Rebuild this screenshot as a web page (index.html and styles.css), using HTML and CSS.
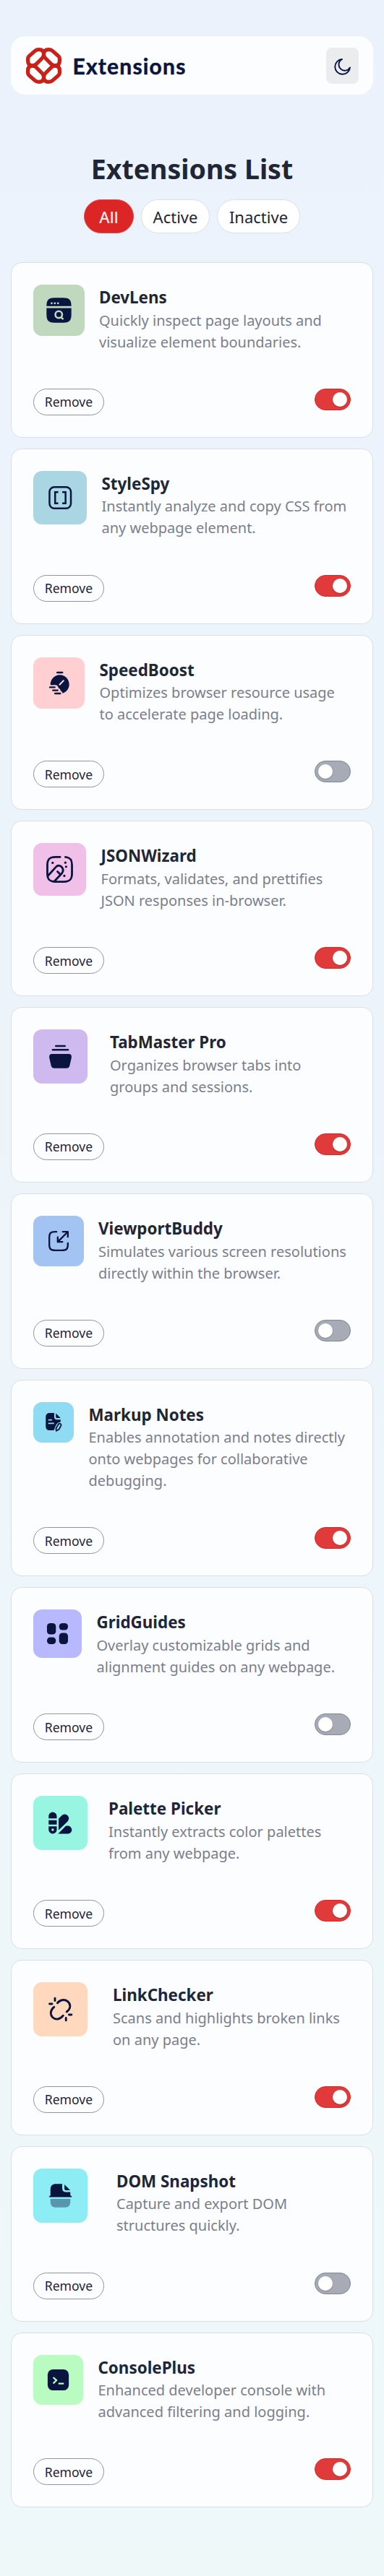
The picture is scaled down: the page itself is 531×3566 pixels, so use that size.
FILE: index.html
```html
<!DOCTYPE html>
<html lang="en">
<head>
<meta charset="utf-8">
<title>Extensions</title>
<link rel="stylesheet" href="styles.css">
</head>
<body>
<header class="topbar">
  <div class="brand">
    <svg class="brand-mark" viewBox="0 0 49 50" fill="none" stroke="#c7221a" stroke-width="5.200">
      <defs><path id="petal" d="M2.600 15V18.500Q2.600 24.800 9 24.800Q12 24.800 14.200 22.600L22.300 14.500Q24.500 12.300 24.500 9Q24.500 2.600 18 2.600Q14.500 2.600 12.500 4.400L4.400 11.500Q2.600 13 2.600 15Z"/></defs>
      <use href="#petal"/>
      <use href="#petal" transform="matrix(-1 0 0 1 49 0)"/>
      <use href="#petal" transform="matrix(1 0 0 -1 0 50)"/>
      <use href="#petal" transform="matrix(-1 0 0 -1 49 50)"/>
    </svg>
    <span class="brand-name">Extensions</span>
  </div>
  <button class="theme" aria-label="Toggle theme">
    <svg viewBox="0 0 23 23" width="23" height="23" fill="none" stroke="#09153e" stroke-width="1.900" stroke-linejoin="round"><path d="M11 1A10.400 10.400 0 1 0 22 12.500A8.300 8.300 0 1 1 11 1Z"/></svg>
  </button>
</header>
<main>
  <h1 class="title">Extensions List</h1>
  <div class="filters">
    <button class="filter filter-on">All</button>
    <button class="filter">Active</button>
    <button class="filter">Inactive</button>
  </div>
  <section class="cards" id="cards"></section>
</main>
<script src="cards.js"></script>
</body>
</html>
```
FILE: styles.css
```css
* { box-sizing: border-box; }
body {
  margin: 0;
  min-height: 3566px;
  padding: 50px 15px 0;
  font-family: "Noto Sans", sans-serif;
  color: #212636;
  background: linear-gradient(180deg, #ebf2fc 0%, #eef8f9 100%);
}
button { font-family: inherit; color: inherit; }
.topbar {
  height: 81px;
  padding: 0 20px 0 21px;
  display: flex;
  align-items: center;
  justify-content: space-between;
  background: #fcfdff;
  border-radius: 20px;
}
.brand { display: flex; align-items: center; gap: 15.500px; }
.brand-mark { width: 49px; height: 50px; }
.brand-name {
  font: 700 30px/36px Lato, sans-serif;
  letter-spacing: 1.200px;
  color: #09153e;
  -webkit-text-stroke: .5px #09153e;
}
.theme {
  width: 45px; height: 50px; padding: 3px 0 0;
  display: flex; align-items: center; justify-content: center;
  border: 0; border-radius: 8px; background: #ebecee;
}
.title { margin: 75px 0 0; font-size: 37.500px; line-height: 56px; text-align: center; }
.filters { display: flex; justify-content: center; gap: 10px; margin-top: 14px; }
.filter {
  width: 95px; height: 47px; padding: 0;
  font-size: 22px;
  background: #fff; border: 1px solid #dedfe2; border-radius: 25px;
}
.filter-wide { width: 115px; }
.filter:last-child { width: 115px; }
.filter-on { width: 69px; font-weight: 500; color: #eee; background: #dc2626; border-color: #dc4a4a; }
.cards { display: flex; flex-direction: column; gap: 15px; margin-top: 40px; }
.card {
  padding: 30px;
  background: #fcfdff;
  border: 1px solid #dbdfe1; border-radius: 15px;
}
.info { display: flex; align-items: flex-start; }
.icon { flex: none; border-radius: 12px; }
.icon svg { display: block; width: 100%; height: 100%; }
.name { margin: 0; padding-top: 1px; font-size: 22.400px; line-height: 33.600px; }
.text { margin: 0; font-size: 20px; line-height: 30px; color: #7a7f8c; white-space: pre-line; }
.actions { display: flex; justify-content: space-between; align-items: flex-start; margin-top: 49.200px; }
.remove {
  height: 37px; width: 98px; padding: 0;
  font-size: 17.600px;
  background: transparent; border: 1px solid #9094a0; border-radius: 19px;
}
.toggle {
  width: 50px; height: 30px; padding: 4px;
  display: flex;
  background: #a6abb5; border: 1px solid #7f8694; border-radius: 15px;
}
.toggle-on { justify-content: flex-end; background: #e03a3a; border-color: #dc2626; }
.knob { width: 20px; height: 20px; border-radius: 50%; background: #fff; box-shadow: 0 1px 2px rgba(0,0,0,.2); }
```
FILE: cards.js
```js
const ink = '#09153e';
const cards = [
  ['DevLens', 'Quickly inspect page layouts and\nvisualize element boundaries.', 1, '#c0d8be', 71, 20,
   `<path fill="${ink}" d="M15.500 25C15.500 18 18 15.500 25 15.500H35C42 15.500 44.500 18 44.500 25V25.200H15.500ZM15.500 27.500H44.500V35C44.500 42 42 44.500 35 44.500H25C18 44.500 15.500 42 15.500 35Z"/><g fill="#c0d8be"><circle cx="21.500" cy="21.800" r="1.200"/><circle cx="25.200" cy="21.800" r="1.200"/><circle cx="28.900" cy="21.800" r="1.200"/></g><g fill="none" stroke="#c0d8be" stroke-width="2.200" stroke-linecap="round"><circle cx="29.800" cy="35" r="4"/><path d="M33 38.500L34.500 40"/></g>`],
  ['StyleSpy', 'Instantly analyze and copy CSS from\nany webpage element.', 1, '#aad6e4', 74, 20.500,
   `<g fill="none" stroke="${ink}" stroke-width="2"><rect x="18.200" y="18" width="24" height="24" rx="5.500"/><path d="M28 23.700H24.500V36.300H28M32.500 23.700H36.200V36.300H32.500"/></g>`],
  ['SpeedBoost', 'Optimizes browser resource usage\nto accelerate page loading.', 0, '#ffcfd2', 71, 20.500,
   `<path fill="${ink}" d="M20 32.400C19.800 26 24.500 20.500 31 20.500C37 20.500 42 25.500 42 31.500C42 36.500 39 40.500 34.500 42L33 39.800C31.500 39.500 32 38 31 36.800C29 36.500 29.500 34.500 28.500 33.800C27.500 31.800 25 32.600 20 32.400Z"/><path fill="none" stroke="${ink}" stroke-width="2" stroke-linecap="round" d="M28 17.700H34M19.500 35H25M23 38.500H28.500M25.500 42.300H31.500"/><path stroke="#ffcfd2" stroke-width="1.800" stroke-linecap="round" d="M30.800 31.800L35.300 27.300"/>`],
  ['JSONWizard', 'Formats, validates, and prettifies\nJSON responses in-browser.', 1, '#f1c0e8', 73, 20.500,
   `<g fill="none" stroke="${ink}" stroke-width="2.300" stroke-linecap="round" stroke-linejoin="round"><path d="M30.500 16H25C18.500 16 16 18.500 16 25V35C16 41.500 18.500 44 25 44H35C41.500 44 44 41.500 44 35V25C44 19 42 16.500 36.500 16"/><path d="M17 37L25.800 27.200C28 24.800 31 25.500 32.500 27.500C34.500 30 34 32.500 32.500 34.500L24 43.500M27.500 32.500L30.500 35.500"/></g><g fill="${ink}"><circle cx="22" cy="22.500" r="1.300"/><circle cx="36.500" cy="22.300" r="1.300"/><circle cx="37.300" cy="27" r="1.300"/><circle cx="35.300" cy="37.300" r="1.300"/></g>`],
  ['TabMaster Pro', 'Organizes browser tabs into\ngroups and sessions.', 1, '#cfbaf0', 75, 31,
   `<path fill="none" stroke="${ink}" stroke-width="2" stroke-linecap="round" d="M25 18.300H35M21.500 22.600H38.500"/><path fill="${ink}" d="M17.800 31.500C17.300 28.500 18.500 27.200 21 27.200H39C41.500 27.200 42.700 28.500 42.200 31.500L40.300 40C39.800 42.200 38.500 43 36.500 43H23.500C21.500 43 20.200 42.200 19.700 40Z"/>`],
  ['ViewportBuddy', 'Simulates various screen resolutions\ndirectly within the browser.', 0, '#a3c4f3', 70, 20,
   `<g fill="none" stroke="${ink}" stroke-width="2" stroke-linecap="round" stroke-linejoin="round"><path d="M27.500 19H26C20.500 19 19 20.500 19 26V34C19 39.500 20.500 41 26 41H34C39.500 41 41 39.500 41 34V32.500M29 31L40.500 19.500M35 19H41V25M29 25.500V31H34.500"/></g>`],
  ['Markup Notes', 'Enables annotation and notes directly\nonto webpages for collaborative\ndebugging.', 1, '#90dbf4', 56, 20.500,
   `<path fill="${ink}" d="M31 16V21.500C31 25 32.500 26 36 26H40.500V29.500C36.500 30 34.500 32 33 35.500L30.500 41.800H25C20.500 41.800 18.500 39.800 18.500 35.500V22.500C18.500 18 20.500 16 25 16ZM33.500 16.500L40.500 23.700H36C34 23.700 33.500 23 33.500 21.500Z"/><path stroke="#90dbf4" stroke-width="1.900" stroke-linecap="round" d="M23 26.500H27M23 31.500H30"/><path fill="none" stroke="${ink}" stroke-width="2" d="M37.500 32.500C39 30.800 42 32.500 41.200 34.800L38 40.500L34.200 42.500L33.700 39Z"/>`],
  ['GridGuides', 'Overlay customizable grids and\nalignment guides on any webpage.', 0, '#b8b8ff', 67, 20.500,
   `<g fill="${ink}"><rect x="17" y="17" width="11" height="14" rx="4"/><rect x="32" y="17" width="11" height="8.500" rx="4"/><rect x="17" y="34.500" width="11" height="8.500" rx="4"/><rect x="32" y="29" width="11" height="14" rx="4"/></g>`],
  ['Palette Picker', 'Instantly extracts color palettes\nfrom any webpage.', 1, '#98f5e1', 75, 29,
   `<path fill="${ink}" d="M17 25V22.500A4.500 4.500 0 0 1 26 22.500V25ZM17 27H26V31.800H17ZM17 33.800H26V37.500A4.500 4.500 0 0 1 17 37.500ZM28 25.300L31.500 21.800A4.500 4.500 0 0 1 38 28.300L28 38ZM27.500 42L34.800 34.500C35.800 33.500 36.500 33.200 38 33.200A4.400 4.400 0 0 1 38.500 42Z"/><circle cx="21.500" cy="37.500" r="1.400" fill="#98f5e1"/>`],
  ['LinkChecker', 'Scans and highlights broken links\non any page.', 1, '#ffd8be', 75, 35,
   `<g fill="none" stroke="${ink}" stroke-width="2.300" stroke-linecap="round"><path d="M26.800 23C29.500 19.500 34.500 18.500 38 21.200C41.500 24 42 29 37 32.800M23 27.500C18.500 31 18.500 36 21.500 39C25 42 29.500 41.500 33 37M24 17.800V20.500M18 24H20.800M36.200 39.500V42.300M39.500 36H42.300"/></g>`],
  ['DOM Snapshot', 'Capture and export DOM\nstructures quickly.', 0, '#8eecf5', 75, 40,
   `<path fill="${ink}" d="M19 30V23.500C19 19 21 17 25.500 17H32V21C32 25 33.500 26 37 26H41V30C43 30 43 31.600 42 31.600H18C17 31.600 17.500 30 19 30ZM34.500 17.500L40.800 24H37C35 24 34.500 23.500 34.500 21.500Z"/><path fill="${ink}" opacity=".4" d="M19 33.500H41V36.500C41 41 39 43 34.500 43H25.500C21 43 19 41 19 36.500Z"/>`],
  ['ConsolePlus', 'Enhanced developer console with\nadvanced filtering and logging.', 1, '#b9fbc0', 69, 20.500,
   `<rect x="17.300" y="17.300" width="25.400" height="25.400" rx="6.500" fill="${ink}"/><path fill="none" stroke="#b9fbc0" stroke-width="1.900" stroke-linecap="round" stroke-linejoin="round" d="M24.500 27.500L28 30.500L24.500 33.800M31 34.500H36"/>`],
];
document.getElementById('cards').innerHTML = cards.map(([name, text, on, color, size, gap, art]) => `
<article class="card">
  <div class="info">
    <div class="icon" style="width:${size}px;height:${size}px;margin-right:${gap}px;background:${color}"><svg viewBox="0 0 60 60">${art}</svg></div>
    <div><h2 class="name">${name}</h2><p class="text">${text}</p></div>
  </div>
  <div class="actions"><button class="remove">Remove</button><span class="toggle${on ? ' toggle-on' : ''}"><span class="knob"></span></span></div>
</article>`).join('');
```
